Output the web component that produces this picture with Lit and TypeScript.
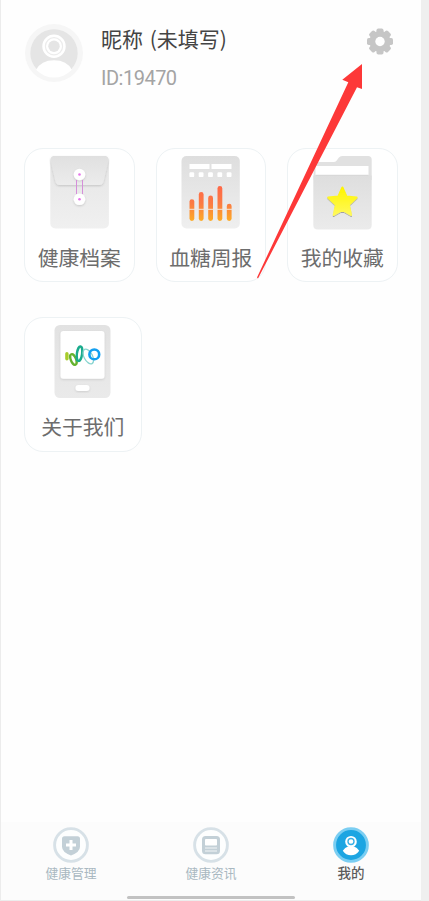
import { LitElement, html, css, svg } from "lit";
import { customElement } from "lit/decorators.js";

const archiveIcon = svg`<svg class="art" viewBox="49 155 61 76" width="61" height="76">
  <defs>
    <linearGradient id="a" x1="0" y1="0" x2="0" y2="1"><stop offset="0" stop-color="#e5e5e5"/><stop offset="1" stop-color="#f0f0f0"/></linearGradient>
    <linearGradient id="f" x1="0" y1="0" x2="0" y2="1"><stop offset="0" stop-color="#e0e0e0"/><stop offset="1" stop-color="#ececec"/></linearGradient>
    <filter id="s" x="-30%" y="-30%" width="160%" height="170%"><feDropShadow dx="0" dy="1" stdDeviation=".8" flood-opacity=".16"/></filter>
  </defs>
  <rect x="50.3" y="156" width="58.6" height="72.5" rx="5" fill="url(#a)"/>
  <path d="M50.5 160q0-4 4-4h50q4 0 4 4l-5 21.500q-1 3.500-4 3.500h-40q-3 0-4-3.500z" fill="url(#f)" filter="url(#s)"/>
  <g filter="url(#s)"><circle cx="79.500" cy="174.500" r="5.800" fill="#fff"/><circle cx="79.500" cy="199.300" r="5.800" fill="#fff"/></g>
  <path d="M76.500 180v14M82.500 180v14" stroke="#d58fda" stroke-width="1"/>
  <circle cx="79.500" cy="174.500" r="1.300" fill="#e674ea"/><circle cx="79.500" cy="199.300" r="1.300" fill="#e674ea"/>
</svg>`;

const bars = [[190, 199.2], [199.3, 192], [208.7, 195.5], [218, 186], [227.3, 203.7]];

const reportIcon = svg`<svg class="art" viewBox="180.500 155 61 76" width="61" height="76">
  <defs>
    <linearGradient id="p" x1="0" y1="0" x2="0" y2="1"><stop offset="0" stop-color="#dedede"/><stop offset="1" stop-color="#efefef"/></linearGradient>
    <linearGradient id="o" gradientUnits="userSpaceOnUse" x1="0" y1="186" x2="0" y2="221"><stop offset="0" stop-color="#ff6848"/><stop offset=".5" stop-color="#fb7b43"/><stop offset="1" stop-color="#fdac25"/></linearGradient>
  </defs>
  <rect x="182" y="156" width="58.300" height="72.500" rx="5" fill="url(#p)"/>
  <path d="M190 164h20v5h-20zM212 164h20v5h-20z" fill="#fff"/>
  ${[192.3, 201.6, 211, 220.3, 229.6].map(x => svg`<rect x=${x - 2.4} y="172.300" width="4.800" height="4.800" rx="1.200" fill="#fff"/>`)}
  ${bars.map(([x, y]) => svg`<rect x=${x} y=${y} width="4.800" height=${221 - y} rx="2.400" fill="url(#o)"/>`)}
  <path d="M189 209.300h44" stroke="#f3e6dd" stroke-width="1"/>
</svg>`;

const folderIcon = svg`<svg class="art" viewBox="312 155 61 76" width="61" height="76">
  <defs>
    <linearGradient id="d" x1="0" y1="0" x2="0" y2="1"><stop offset="0" stop-color="#dedede"/><stop offset="1" stop-color="#ebebeb"/></linearGradient>
    <linearGradient id="y" x1="0" y1="0" x2="0" y2="1"><stop offset="0" stop-color="#fff500"/><stop offset="1" stop-color="#fff95a"/></linearGradient>
    <filter id="t" x="-30%" y="-30%" width="160%" height="170%"><feDropShadow dx="0" dy="1" stdDeviation=".7" flood-opacity=".3"/></filter>
  </defs>
  <path d="M313.500 165q0-3 3-3h17q2 0 3.200-1.500l2-2.700q1.300-1.800 3.500-1.800H368q3.700 0 3.700 3.500V180h-58z" fill="#e1e1e1"/>
  <path d="M315.500 166h53v10h-53z" fill="#fff"/>
  <path d="M313.300 175.500h58.400V225q0 4.500-4.500 4.500h-49.400q-4.500 0-4.500-4.500z" fill="url(#d)"/>
  <path d="M315.500 175.300h53" stroke="#d2d2d2"/>
  <path d="M342.400 187.500l4 9 10.200 1-7.700 7.200 2.200 10.200-8.700-5-8.700 5 2.200-10.200-7.700-7.200 10.200-1z" fill="url(#y)" stroke="url(#y)" stroke-width="2" stroke-linejoin="round" filter="url(#t)"/>
</svg>`;

const aboutIcon = svg`<svg class="art" viewBox="52.500 324 61 76" width="61" height="76">
  <defs>
    <linearGradient id="g" x1="0" y1="0" x2="0" y2="1"><stop offset="0" stop-color="#e2e2e2"/><stop offset="1" stop-color="#eaeaea"/></linearGradient>
    <filter id="u" x="-20%" y="-20%" width="140%" height="150%"><feDropShadow dx="0" dy="1" stdDeviation=".8" flood-opacity=".12"/></filter>
  </defs>
  <rect x="55" y="325" width="56" height="73" rx="5.500" fill="url(#g)"/>
  <rect x="61" y="331" width="44" height="47.800" rx="3" fill="#fff" filter="url(#u)"/>
  <rect x="76" y="385" width="14" height="6" rx="3" fill="#fff" filter="url(#u)"/>
  <rect x="65.700" y="352" width="3.400" height="8.500" rx="1.700" fill="#a8cc2b"/>
  <g fill="none">
    <ellipse cx="73.900" cy="359.500" rx="2.600" ry="5.600" transform="rotate(-22 73.900 359.500)" stroke="#65b22d" stroke-width="2.300"/>
    <ellipse cx="80" cy="353.700" rx="2.600" ry="7.300" transform="rotate(8 80 353.700)" stroke="#1aab8c" stroke-width="2.400"/>
    <ellipse cx="88.800" cy="356.500" rx="4.200" ry="8" transform="rotate(-28 88.800 356.500)" stroke="#87d4cf" stroke-width="1.300"/>
    <circle cx="94.800" cy="354.400" r="4.900" stroke="#139ff0" stroke-width="2.600"/>
  </g>
</svg>`;

const shieldIcon = svg`<svg viewBox="0 0 36 36" width="36" height="36">
  <circle cx="18" cy="18" r="16.400" fill="#fdfefe" stroke="#d7e1e7" stroke-width="2.900"/>
  <path d="M11.500 9.300h13q2.500 0 2.500 2.500v8q0 5.400-9 8.700-9-3.300-9-8.700v-8q0-2.500 2.500-2.500z" fill="#c3d0d7"/>
  <path d="M18 13v10M13 18h10" stroke="#fff" stroke-width="3"/>
</svg>`;

const newsIcon = svg`<svg viewBox="0 0 36 36" width="36" height="36">
  <circle cx="18" cy="18" r="16.400" fill="#fdfefe" stroke="#d7e1e7" stroke-width="2.900"/>
  <rect x="9" y="9" width="18" height="18.300" rx="3.500" fill="#c3d0d7"/>
  <rect x="12" y="12" width="12" height="6.500" rx=".8" fill="#fff"/>
  <path d="M12 21h12M12 24h12" stroke="#f3f6f8" stroke-width="1.100"/>
</svg>`;

const mineIcon = svg`<svg viewBox="0 0 36 36" width="36" height="36">
  <circle cx="18" cy="18" r="16.400" fill="#1ca5e2" stroke="#7bcef2" stroke-width="2.900"/>
  <path d="M9.800 23.800q2.200-3.300 5.200-4.300h6q3 1 5.200 4.300-3 4.500-8.200 4.500t-8.200-4.500z" fill="#fff"/>
  <circle cx="18" cy="14.700" r="5.800" fill="#fff"/>
  <circle cx="18" cy="14.500" r="3" fill="#fff" stroke="#3bb1e6" stroke-width="1.400"/>
</svg>`;

@customElement("app-root")
export class AppRoot extends LitElement {
  static styles = css`
    :host { display: block; height: 901px; background: #efefef; font-family: "Noto Sans CJK SC", sans-serif; overflow: hidden; }
    .phone { position: relative; box-sizing: border-box; width: 421px; height: 901px; background: #fefefe; border-left: 1px solid #ececec; border-bottom: 1px solid #ececec; display: flex; flex-direction: column; }
    svg { display: block; flex: none; }
    header { display: flex; height: 147.500px; box-sizing: border-box; padding: 24px 28px 0 23.500px; align-items: flex-start; }
    .who { flex: 1; margin-left: 18.500px; white-space: nowrap; }
    .name { font-size: 21px; line-height: 30px; color: #444; word-spacing: 2px; margin-top: -1px; }
    .uid { font-family: Roboto, sans-serif; font-size: 20px; line-height: 24px; letter-spacing: -0.500px; color: #a4a4a4; margin-top: 13px; }
    .gear { margin-top: 4px; }
    .grid { display: flex; flex-wrap: wrap; column-gap: 21px; row-gap: 35px; padding-left: 23px; flex: 1; align-content: flex-start; }
    .card { box-sizing: border-box; width: 110.500px; height: 134.500px; border: 1px solid #edf2f4; border-radius: 19px; background: #fff; display: flex; flex-direction: column; align-items: center; padding-top: 6px; }
    .card.wide { width: 117.500px; }
    .label { font-size: 20.800px; line-height: 30px; margin-top: 11px; color: #6d6d6d; white-space: nowrap; }
    nav { display: flex; height: 78px; background: #fcfcfc; }
    .tab { width: 140px; display: flex; flex-direction: column; align-items: center; padding-top: 5px; color: #a9b8c1; font-size: 12.800px; line-height: 19px; }
    .tab.on { color: #5c5c5c; font-size: 13.500px; font-weight: 500; }
    .home { position: absolute; left: 126px; top: 896px; width: 168px; height: 3px; border-radius: 2px; background: #c2c2c2; }
    .arrow { position: absolute; left: 254px; top: 60px; }
  `;

  private card(icon: unknown, label: string, wide = false) {
    return html`<div class="card ${wide ? "wide" : ""}">${icon}<div class="label">${label}</div></div>`;
  }

  render() {
    return html`<div class="phone">
      <header>
        <svg viewBox="0 0 58 58" width="58" height="58">
          <defs><clipPath id="c"><circle cx="29" cy="29" r="24.500"/></clipPath></defs>
          <circle cx="29" cy="29" r="29" fill="#f6f6f6"/>
          <circle cx="29" cy="29" r="23.700" fill="#e5e5e5"/>
          <path d="M11 46q5-9.700 18-9.700T47 46v8H11z" fill="#fff" clip-path="url(#c)"/>
          <circle cx="29" cy="22.300" r="11.700" fill="#fff"/>
          <circle cx="29" cy="22.300" r="8.600" fill="none" stroke="#ececec" stroke-width="1.200"/>
          <circle cx="29" cy="22.300" r="5.700" fill="#e5e5e5"/>
        </svg>
        <div class="who"><div class="name">昵称 (未填写)</div><div class="uid">ID:19470</div></div>
        <svg class="gear" viewBox="-13 -13 26 26" width="26" height="27">
          ${[0, 45, 90, 135].map(a => svg`<rect x="-3.500" y="-13" width="7" height="26" rx="1.800" fill="#c6c6c6" transform="rotate(${a})"/>`)}
          <circle r="10.600" fill="#c6c6c6"/><circle r="4.700" fill="#fff"/>
        </svg>
      </header>
      <div class="grid">
        ${this.card(archiveIcon, "健康档案")}
        ${this.card(reportIcon, "血糖周报")}
        ${this.card(folderIcon, "我的收藏")}
        ${this.card(aboutIcon, "关于我们", true)}
      </div>
      <nav>
        <div class="tab">${shieldIcon}<span>健康管理</span></div>
        <div class="tab">${newsIcon}<span>健康资讯</span></div>
        <div class="tab on">${mineIcon}<span>我的</span></div>
      </nav>
      <div class="home"></div>
      <svg class="arrow" viewBox="255 60 110 222" width="110" height="222">
        <path d="M362 64L342.300 79.700l6 2.500L257 277.500l1 1L357 87.300l5 1.700z" fill="#fd3838"/>
      </svg>
    </div>`;
  }
}
